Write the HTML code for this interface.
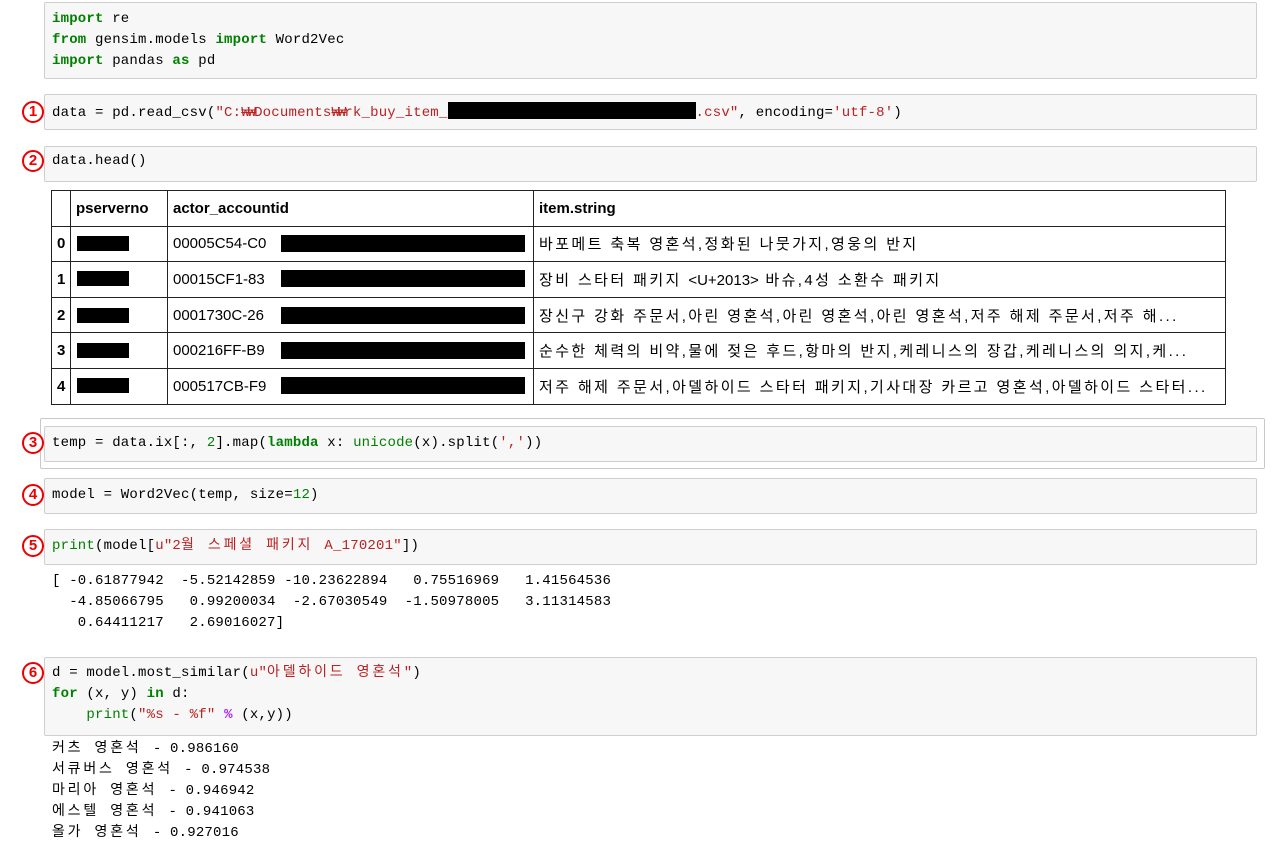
<!DOCTYPE html>
<html><head><meta charset="utf-8"><style>
*{margin:0;padding:0;box-sizing:border-box}
body{width:1280px;height:849px;background:#fff;position:relative;overflow:hidden;font-family:"Liberation Mono","Noto Sans CJK KR",monospace;color:#000}
.box{position:absolute;left:44px;width:1213px;background:#f7f7f7;border:1px solid #cfcfcf;border-radius:2px}
.ln{position:absolute;left:52px;font-size:14px;line-height:21px;white-space:pre;letter-spacing:0.2px}
.k{color:#008000;font-weight:bold}
.s{color:#ba2121}
.n{color:#008000}
.f{color:#008000}
.p{color:#aa22ff;font-weight:bold}
.h{font-size:14px;line-height:21px;letter-spacing:2.8px}
.w{letter-spacing:-2px}
.c{position:absolute;left:22px;width:22px;height:22px;border:2px solid #e00;border-radius:50%;color:#e00;font:bold 15px/18px "Liberation Sans",sans-serif;text-align:center;background:#fff}
.red{position:absolute;background:#000}
table{position:absolute;left:51px;top:190px;border-collapse:collapse;font-family:"Liberation Sans","Noto Sans CJK KR",sans-serif;font-size:15px;table-layout:fixed;width:1174px}
td,th{border:1.5px solid #222;height:35.6px;padding:0 5px;text-align:left;white-space:nowrap;overflow:hidden}
th{font-weight:bold}
td.i{font-weight:bold}
td.t{letter-spacing:2.4px;font-size:15px}
</style></head><body>

<div class="box" style="top:2px;height:77px"></div>
<div class="ln" style="top:9px"><span class="k">import</span> re</div>
<div class="ln" style="top:30px"><span class="k">from</span> gensim.models <span class="k">import</span> Word2Vec</div>
<div class="ln" style="top:51px"><span class="k">import</span> pandas <span class="k">as</span> pd</div>

<div class="box" style="top:94px;height:36px"></div>
<div class="c" style="top:101px">1</div>
<div class="ln" style="top:102px">data = pd.read_csv(<span class="s">"C:<span class="w">₩₩</span>Documents<span class="w">₩₩</span>rk_buy_item_<span style="display:inline-block;width:248px;height:17px;background:#000;vertical-align:-3px"></span>.csv"</span>, encoding=<span class="s">'utf-8'</span>)</div>

<div class="box" style="top:146px;height:36px"></div>
<div class="c" style="top:150px">2</div>
<div class="ln" style="top:151px">data.head()</div>

<table>
<colgroup><col style="width:19px"><col style="width:97px"><col style="width:366px"><col style="width:692px"></colgroup>
<tr><th></th><th>pserverno</th><th>actor_accountid</th><th>item.string</th></tr>
<tr><td class="i">0</td><td></td><td>00005C54-C0</td><td class="t">바포메트 축복 영혼석,정화된 나뭇가지,영웅의 반지</td></tr>
<tr><td class="i">1</td><td></td><td>00015CF1-83</td><td class="t">장비 스타터 패키지 <span style="letter-spacing:0">&lt;U+2013&gt;</span> 바슈,4성 소환수 패키지</td></tr>
<tr><td class="i">2</td><td></td><td>0001730C-26</td><td class="t">장신구 강화 주문서,아린 영혼석,아린 영혼석,아린 영혼석,저주 해제 주문서,저주 해...</td></tr>
<tr><td class="i">3</td><td></td><td>000216FF-B9</td><td class="t">순수한 체력의 비약,물에 젖은 후드,항마의 반지,케레니스의 장갑,케레니스의 의지,케...</td></tr>
<tr><td class="i">4</td><td></td><td>000517CB-F9</td><td class="t">저주 해제 주문서,아델하이드 스타터 패키지,기사대장 카르고 영혼석,아델하이드 스타터...</td></tr>
</table>
<div class="red" style="left:77px;top:236px;width:52px;height:15px"></div>
<div class="red" style="left:77px;top:271px;width:52px;height:15px"></div>
<div class="red" style="left:77px;top:308px;width:52px;height:15px"></div>
<div class="red" style="left:77px;top:343px;width:52px;height:15px"></div>
<div class="red" style="left:77px;top:378px;width:52px;height:15px"></div>
<div class="red" style="left:281px;top:235px;width:244px;height:17px"></div>
<div class="red" style="left:281px;top:270px;width:244px;height:17px"></div>
<div class="red" style="left:281px;top:307px;width:244px;height:17px"></div>
<div class="red" style="left:281px;top:342px;width:244px;height:17px"></div>
<div class="red" style="left:281px;top:377px;width:244px;height:17px"></div>

<div style="position:absolute;left:40px;top:418px;width:1225px;height:51px;border:1px solid #c8c8c8;border-radius:2px"></div>
<div class="box" style="top:426px;height:36px"></div>
<div class="c" style="top:432px">3</div>
<div class="ln" style="top:433px">temp = data.ix[:, <span class="n">2</span>].map(<span class="k">lambda</span> x: <span class="f">unicode</span>(x).split(<span class="s">','</span>))</div>

<div class="box" style="top:478px;height:36px"></div>
<div class="c" style="top:484px">4</div>
<div class="ln" style="top:485px">model = Word2Vec(temp, size=<span class="n">12</span>)</div>

<div class="box" style="top:529px;height:36px"></div>
<div class="c" style="top:535px">5</div>
<div class="ln" style="top:536px"><span class="f">print</span>(model[<span class="s">u"2<span class="h">월 스페셜 패키지 </span>A_170201"</span>])</div>

<div class="ln" style="top:571px">[ -0.61877942  -5.52142859 -10.23622894   0.75516969   1.41564536
  -4.85066795   0.99200034  -2.67030549  -1.50978005   3.11314583
   0.64411217   2.69016027]</div>

<div class="box" style="top:657px;height:79px"></div>
<div class="c" style="top:662px">6</div>
<div class="ln" style="top:663px">d = model.most_similar(<span class="s">u"<span class="h">아델하이드 영혼석</span>"</span>)
<span class="k">for</span> (x, y) <span class="k">in</span> d:
    <span class="f">print</span>(<span class="s">"%s - %f"</span> <span class="p">%</span> (x,y))</div>

<div class="ln" style="top:739px"><span class="h">커츠 영혼석 </span>- 0.986160
<span class="h">서큐버스 영혼석 </span>- 0.974538
<span class="h">마리아 영혼석 </span>- 0.946942
<span class="h">에스텔 영혼석 </span>- 0.941063
<span class="h">올가 영혼석 </span>- 0.927016</div>
</body></html>
